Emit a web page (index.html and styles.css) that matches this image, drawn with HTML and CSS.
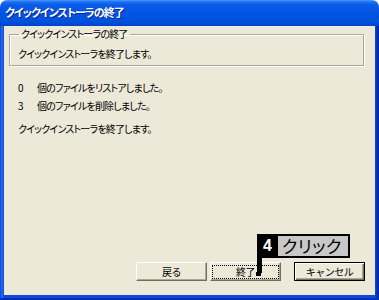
FILE: index.html
```html
<!DOCTYPE html>
<html lang="ja">
  <head>
    <meta charset="UTF-8" />
    <title>クイックインストーラの終了</title>
    <link rel="stylesheet" href="styles.css">
  </head>
  <body>
    <div class="window">
      <div class="titlebar">クイックインストーラの終了</div>
      <div class="frame">
        <div class="client">
          <fieldset class="group">
            <legend>クイックインストーラの終了</legend>
            <p>クイックインストーラを終了します。</p>
          </fieldset>

          <div class="log">
            <div class="row"><span class="num">0</span><span>個のファイルをリストアしました。</span></div>
            <div class="row"><span class="num">3</span><span>個のファイルを削除しました。</span></div>
          </div>
          <p class="final">クイックインストーラを終了します。</p>

          <div class="buttons">
            <button class="btn">戻る</button>
            <button class="btn focus"><span>終了</span></button>
            <button class="btn default">キャンセル</button>
          </div>

          <!-- step callout over the finish button -->
          <div class="callout">
            <span class="step">4</span><span class="label">クリック</span>
            <span class="stem"></span>
          </div>
        </div>
      </div>
    </div>
  </body>
</html>
```

FILE: styles.css
```css
body {
  margin: 0;
  background: #fff;
  font-family: "Noto Sans CJK JP", sans-serif;
  font-feature-settings: "palt";
}
.window {
  width: 379px;
  height: 300px;
  display: flex;
  flex-direction: column;
  border-radius: 7px 7px 0 0;
  overflow: hidden;
}
.titlebar {
  height: 26px;
  flex: none;
  box-sizing: border-box;
  padding: 4px 0 0 5px;
  color: #fff;
  font-size: 11px;
  font-weight: bold;
  letter-spacing: -1px;
  text-shadow: 1px 1px 0 #0a1e8c;
  background: linear-gradient(to bottom, #4a9cff 0, #1c6ef4 2px, #0a5ce8 5px, #0055e4 14px, #0050dc 22px, #0043c8 26px);
}
.frame {
  flex: 1;
  display: flex;
  padding: 0 4px 5px 4px;
  background: linear-gradient(to right, #0b47d6 0, #2a6cf0 2px, #0b4ad8 4px, #0b4ad8 calc(100% - 4px), #0032b8 calc(100% - 2px), #001e9c 100%);
  box-shadow: inset 0 -2px 0 #0030b8;
}
.client {
  flex: 1;
  position: relative;
  display: flex;
  flex-direction: column;
  background: #ece9d8;
  font-size: 10px;
  letter-spacing: -0.8px;
  color: #000;
  padding: 0 10px 14px 5px;
}
.group {
  margin: 1px 1px 0 0;
  padding: 2px 8px 0 8px;
  height: 35px;
  border: 1px solid #aca899;
  box-shadow: 1px 1px 0 #fff, inset 1px 1px 0 #fff;
}
.group legend {
  padding: 0 2px;
  margin-left: 1px;
  line-height: 14px;
}
.group p {
  margin: 4px 0 0 0;
  line-height: 14px;
}
.log {
  margin-top: 13px;
  padding-left: 9px;
}
.row {
  display: flex;
  line-height: 18px;
}
.num {
  width: 19px;
}
.final {
  margin: 5px 0 0 9px;
  line-height: 18px;
}
.buttons {
  margin-top: auto;
  display: flex;
  justify-content: flex-end;
  gap: 3px;
}
.btn {
  width: 71px;
  height: 19px;
  padding: 0;
  font-family: inherit;
  font-size: 10px;
  letter-spacing: -0.5px;
  color: #000;
  background: #ece9d8;
  border: 1px solid;
  border-color: #fff #716f64 #716f64 #fff;
  box-shadow: inset -1px -1px 0 #aca899;
}
.btn.focus span {
  display: block;
  margin: 2px;
  line-height: 12px;
  outline: 1px dotted #000;
  outline-offset: 0;
}
.btn.default {
  margin-left: 10px;
  border-color: #000;
  box-shadow: inset 1px 1px 0 #fff, inset -1px -1px 0 #716f64, inset -2px -2px 0 #aca899;
}
.callout {
  position: absolute;
  left: 253px;
  top: 208px;
  display: flex;
  letter-spacing: normal;
}
.step {
  width: 21px;
  height: 24px;
  background: #000;
  color: #fff;
  font-family: "Liberation Sans", sans-serif;
  font-weight: bold;
  font-size: 16px;
  line-height: 24px;
  text-align: center;
}
.label {
  height: 20px;
  padding: 0 4px;
  width: 62px;
  background: #c8c8c8;
  border: 2px solid #000;
  border-left: none;
  color: #000;
  font-size: 17px;
  line-height: 20px;
  letter-spacing: 0.5px;
}
.stem {
  position: absolute;
  left: 0;
  top: 24px;
  width: 5px;
  height: 15px;
  background: #000;
}
.stem::after {
  content: "";
  position: absolute;
  left: -1px;
  bottom: -3px;
  width: 5px;
  height: 4px;
  background: #000;
}
```
